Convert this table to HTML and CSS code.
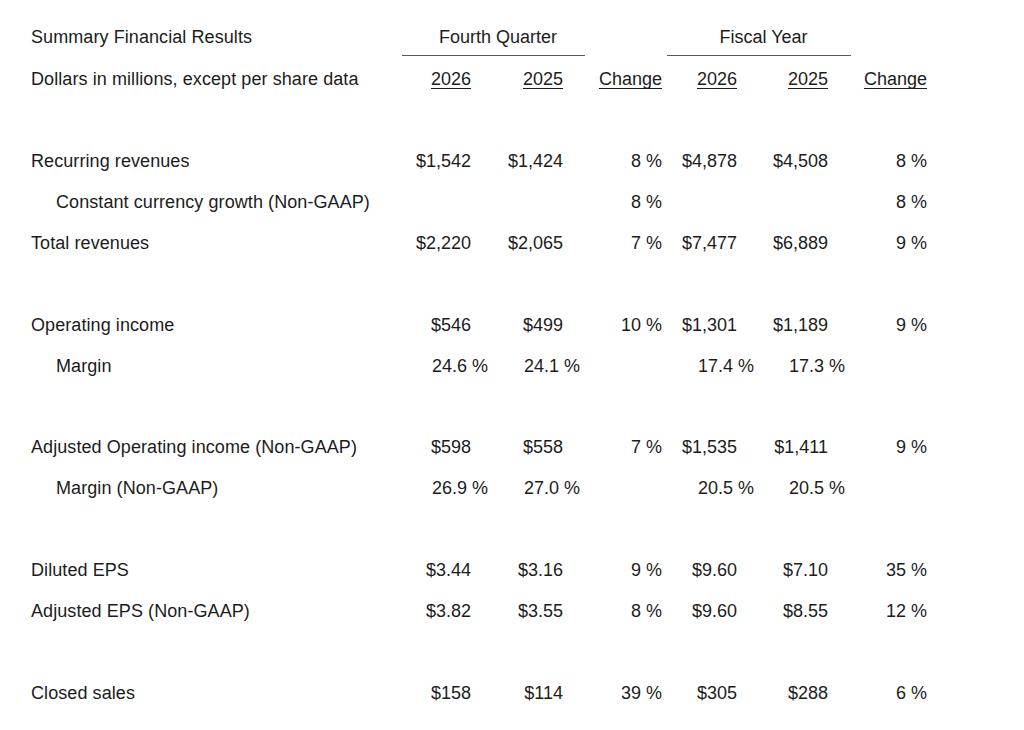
FILE: index.html
```html
<!DOCTYPE html>
<html lang="en">
<head>
<meta charset="utf-8">
<title>Summary Financial Results</title>
<link rel="stylesheet" href="styles.css">
</head>
<body>
<div class="report">
  <div class="row title">
    <div class="label">Summary Financial Results</div>
    <div class="group q">Fourth Quarter</div>
    <div class="group fy">Fiscal Year</div>
  </div>
  <div class="row">
    <div class="label">Dollars in millions, except per share data</div>
    <div class="num"><span class="ul">2026</span></div>
    <div class="num"><span class="ul">2025</span></div>
    <div class="num"><span class="ul">Change</span></div>
    <div class="num"><span class="ul">2026</span></div>
    <div class="num"><span class="ul">2025</span></div>
    <div class="num"><span class="ul">Change</span></div>
  </div>
  <div class="row blank"></div>
  <div class="row">
    <div class="label">Recurring revenues</div>
    <div class="num">$1,542</div><div class="num">$1,424</div><div class="num">8 %</div>
    <div class="num">$4,878</div><div class="num">$4,508</div><div class="num">8 %</div>
  </div>
  <div class="row">
    <div class="label sub">Constant currency growth (Non-GAAP)</div>
    <div class="num"></div><div class="num"></div><div class="num">8 %</div>
    <div class="num"></div><div class="num"></div><div class="num">8 %</div>
  </div>
  <div class="row">
    <div class="label">Total revenues</div>
    <div class="num">$2,220</div><div class="num">$2,065</div><div class="num">7 %</div>
    <div class="num">$7,477</div><div class="num">$6,889</div><div class="num">9 %</div>
  </div>
  <div class="row blank"></div>
  <div class="row">
    <div class="label">Operating income</div>
    <div class="num">$546</div><div class="num">$499</div><div class="num">10 %</div>
    <div class="num">$1,301</div><div class="num">$1,189</div><div class="num">9 %</div>
  </div>
  <div class="row">
    <div class="label sub">Margin</div>
    <div class="num pct">24.6 %</div><div class="num pct">24.1 %</div><div class="num"></div>
    <div class="num pct">17.4 %</div><div class="num pct">17.3 %</div><div class="num"></div>
  </div>
  <div class="row blank"></div>
  <div class="row">
    <div class="label">Adjusted Operating income (Non-GAAP)</div>
    <div class="num">$598</div><div class="num">$558</div><div class="num">7 %</div>
    <div class="num">$1,535</div><div class="num">$1,411</div><div class="num">9 %</div>
  </div>
  <div class="row">
    <div class="label sub">Margin (Non-GAAP)</div>
    <div class="num pct">26.9 %</div><div class="num pct">27.0 %</div><div class="num"></div>
    <div class="num pct">20.5 %</div><div class="num pct">20.5 %</div><div class="num"></div>
  </div>
  <div class="row blank"></div>
  <div class="row">
    <div class="label">Diluted EPS</div>
    <div class="num">$3.44</div><div class="num">$3.16</div><div class="num">9 %</div>
    <div class="num">$9.60</div><div class="num">$7.10</div><div class="num">35 %</div>
  </div>
  <div class="row">
    <div class="label">Adjusted EPS (Non-GAAP)</div>
    <div class="num">$3.82</div><div class="num">$3.55</div><div class="num">8 %</div>
    <div class="num">$9.60</div><div class="num">$8.55</div><div class="num">12 %</div>
  </div>
  <div class="row blank"></div>
  <div class="row">
    <div class="label">Closed sales</div>
    <div class="num">$158</div><div class="num">$114</div><div class="num">39 %</div>
    <div class="num">$305</div><div class="num">$288</div><div class="num">6 %</div>
  </div>
</div>
</body>
</html>
```
FILE: styles.css
```css
html, body {
  margin: 0;
  padding: 0;
  background: #ffffff;
}

body {
  font-family: "Liberation Sans", Arial, sans-serif;
  font-size: 18px;
  color: #1c1c1c;
}

.report {
  padding: 17px 0 0 31px;
}

.row {
  display: grid;
  grid-template-columns: 349px 91px 92px 99px 75px 91px 99px;
  height: 40.875px;
  line-height: 40.875px;
  white-space: nowrap;
}

.row.title {
  height: 42.375px;
}

.label {
  grid-column: 1;
  letter-spacing: 0.08px;
}

.label.sub {
  padding-left: 25px;
}

.num {
  text-align: right;
}

.num.pct {
  margin-right: -17px;
}

.ul {
  text-decoration: underline;
  text-decoration-thickness: 1px;
  text-underline-offset: 3px;
}

.group {
  height: 39px;
  box-sizing: border-box;
  border-bottom: 1px solid #5a5a5a;
  text-align: center;
  padding-left: 9px;
  align-self: start;
}

.group.q {
  grid-column: 2 / 4;
  margin-left: 22px;
  margin-right: -22px;
}

.group.fy {
  grid-column: 5 / 7;
  margin-left: 5px;
  margin-right: -23px;
}
```
